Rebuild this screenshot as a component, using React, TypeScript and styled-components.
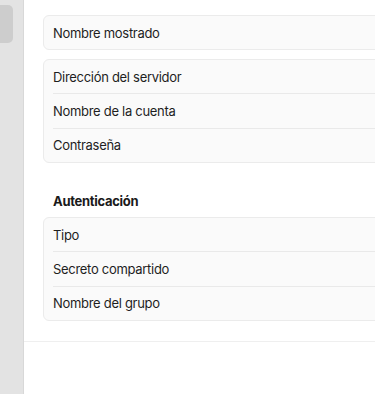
import React from "react";
import styled, { createGlobalStyle } from "styled-components";

const GlobalStyle = createGlobalStyle`
  html, body { margin: 0; padding: 0; background: #ffffff; }
  body { font-family: Inter, "Noto Sans", "Liberation Sans", sans-serif; color: #1e1e1e; overflow: hidden; }
  * { box-sizing: border-box; }
`;

const Shell = styled.div`
  display: flex;
  width: 375px;
  height: 394px;
  overflow: hidden;
  background: #ffffff;
`;

const Sidebar = styled.aside`
  flex: 0 0 24px;
  background: #e3e3e3;
  border-right: 1px solid #d8d8d8;
  padding-top: 5px;
`;

const SidebarItem = styled.div`
  height: 38px;
  margin-left: -6px;
  width: 19px;
  background: #cdcdcd;
  border-radius: 5px;
`;

const Main = styled.main`
  flex: 1 1 auto;
  min-width: 0;
  overflow: hidden;
  display: flex;
  flex-direction: column;
`;

const Content = styled.div`
  width: 420px;
  padding: 15px 0 20px 19px;
  display: flex;
  flex-direction: column;
`;

const Card = styled.div<{ $mt?: number }>`
  margin-top: ${(p) => p.$mt ?? 0}px;
  background: #fafafa;
  border: 1px solid #ebebeb;
  border-radius: 6px;
  display: flex;
  flex-direction: column;
`;

const Row = styled.div`
  height: 33px;
  margin-left: 9px;
  display: flex;
  align-items: center;
  font-size: 13px;
  letter-spacing: -0.3px;
  & + & {
    height: 34.5px;
    border-top: 1px solid #e9e9e9;
  }
`;

const SectionTitle = styled.h2`
  margin: 28px 0 6px 10px;
  height: 20px;
  line-height: 20px;
  font-size: 13px;
  font-weight: 700;
  letter-spacing: -0.3px;
  color: #1a1a1a;
`;

const Footer = styled.div`
  border-top: 1px solid #efefef;
  flex: 1 1 auto;
`;

const Section = ({ rows, mt }: { rows: string[]; mt?: number }) => (
  <Card $mt={mt}>
    {rows.map((r) => (
      <Row key={r}>{r}</Row>
    ))}
  </Card>
);

export default function App() {
  return (
    <>
      <GlobalStyle />
      <Shell>
        <Sidebar>
          <SidebarItem />
        </Sidebar>
        <Main>
          <Content>
            <Section rows={["Nombre mostrado"]} />
            <Section
              mt={9}
              rows={["Dirección del servidor", "Nombre de la cuenta", "Contraseña"]}
            />
            <SectionTitle>Autenticación</SectionTitle>
            <Section rows={["Tipo", "Secreto compartido", "Nombre del grupo"]} />
          </Content>
          <Footer />
        </Main>
      </Shell>
    </>
  );
}
